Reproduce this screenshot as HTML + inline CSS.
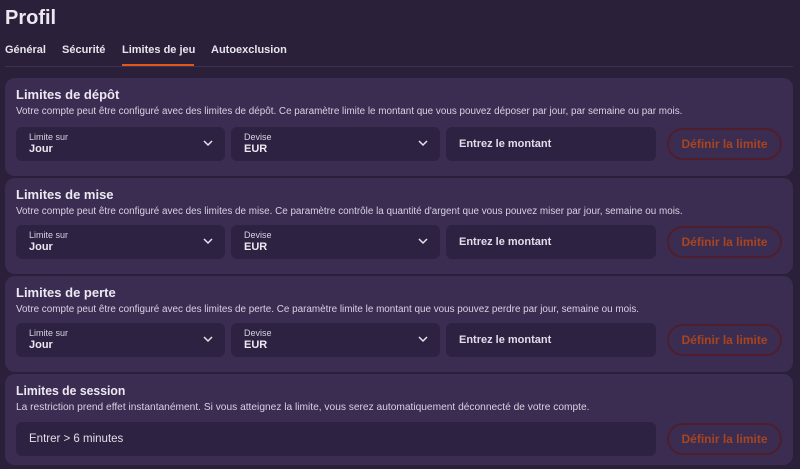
<!DOCTYPE html>
<html><head><meta charset="utf-8"><style>
*{box-sizing:border-box;margin:0;padding:0}
body{width:800px;height:469px;overflow:hidden;background:#2a2039;font-family:"Liberation Sans",sans-serif;color:#ece8f2;position:relative}
.a{position:absolute}
h1{position:absolute;left:5px;top:7px;font-size:20px;font-weight:bold}
.tab{position:absolute;top:44px;font-size:11px;font-weight:bold;color:#e8e4ee}
.div{left:5px;top:66px;width:788px;height:1px;background:#3d3350}
.card{position:absolute;left:5px;width:788px;background:#3b2d52;border-radius:10px}
.t{position:absolute;left:11px;top:9px;font-size:13px;font-weight:bold}
.d{position:absolute;left:11px;top:28px;font-size:9.9px;color:#d8d2e2;white-space:nowrap}
.f{position:absolute;top:49px;height:34px;background:#2d2241;border-radius:6px}
.l{position:absolute;left:13px;top:5px;font-size:9px;color:#d8d2e2}
.v{position:absolute;left:13px;top:16px;font-size:11px;font-weight:bold}
.p{position:absolute;left:13px;top:11px;font-size:11px;font-weight:bold;color:#e2dcea}
.ch{position:absolute;right:12px;top:12px}
.b{position:absolute;left:662px;top:50px;width:115px;height:32px;border:2px solid #4f1e2c;border-radius:16px;color:#a8441f;font-size:12px;font-weight:bold;text-align:center;line-height:28px}
</style></head><body>
<h1>Profil</h1>
<div class="tab" style="left:5px">Général</div>
<div class="tab" style="left:62px">Sécurité</div>
<div class="tab" style="left:122px">Limites de jeu</div>
<div class="tab" style="left:211px">Autoexclusion</div>
<div class="a div"></div>
<div class="a" style="left:122px;top:64px;width:72px;height:2px;background:#e0561c"></div>

<div class="card" style="top:78px;height:98px">
<div class="t">Limites de dépôt</div>
<div class="d">Votre compte peut être configuré avec des limites de dépôt. Ce paramètre limite le montant que vous pouvez déposer par jour, par semaine ou par mois.</div>
<div class="f" style="left:11px;width:209px"><div class="l">Limite sur</div><div class="v">Jour</div><svg class="ch" width="10" height="8" viewBox="0 0 10 8"><path d="M1 2l4 4 4-4" stroke="#e8e4ee" stroke-width="1.5" fill="none"/></svg></div>
<div class="f" style="left:226px;width:209px"><div class="l">Devise</div><div class="v">EUR</div><svg class="ch" width="10" height="8" viewBox="0 0 10 8"><path d="M1 2l4 4 4-4" stroke="#e8e4ee" stroke-width="1.5" fill="none"/></svg></div>
<div class="f" style="left:441px;width:210px"><div class="p">Entrez le montant</div></div>
<div class="b">Définir la limite</div>
</div>

<div class="card" style="top:178px;height:96px">
<div class="t">Limites de mise</div>
<div class="d">Votre compte peut être configuré avec des limites de mise. Ce paramètre contrôle la quantité d'argent que vous pouvez miser par jour, semaine ou mois.</div>
<div class="f" style="left:11px;width:209px;top:47px"><div class="l">Limite sur</div><div class="v">Jour</div><svg class="ch" width="10" height="8" viewBox="0 0 10 8"><path d="M1 2l4 4 4-4" stroke="#e8e4ee" stroke-width="1.5" fill="none"/></svg></div>
<div class="f" style="left:226px;width:209px;top:47px"><div class="l">Devise</div><div class="v">EUR</div><svg class="ch" width="10" height="8" viewBox="0 0 10 8"><path d="M1 2l4 4 4-4" stroke="#e8e4ee" stroke-width="1.5" fill="none"/></svg></div>
<div class="f" style="left:441px;width:210px;top:47px"><div class="p">Entrez le montant</div></div>
<div class="b" style="top:48px">Définir la limite</div>
</div>

<div class="card" style="top:276px;height:96px">
<div class="t">Limites de perte</div>
<div class="d">Votre compte peut être configuré avec des limites de perte. Ce paramètre limite le montant que vous pouvez perdre par jour, semaine ou mois.</div>
<div class="f" style="left:11px;width:209px;top:47px"><div class="l">Limite sur</div><div class="v">Jour</div><svg class="ch" width="10" height="8" viewBox="0 0 10 8"><path d="M1 2l4 4 4-4" stroke="#e8e4ee" stroke-width="1.5" fill="none"/></svg></div>
<div class="f" style="left:226px;width:209px;top:47px"><div class="l">Devise</div><div class="v">EUR</div><svg class="ch" width="10" height="8" viewBox="0 0 10 8"><path d="M1 2l4 4 4-4" stroke="#e8e4ee" stroke-width="1.5" fill="none"/></svg></div>
<div class="f" style="left:441px;width:210px;top:47px"><div class="p">Entrez le montant</div></div>
<div class="b" style="top:48px">Définir la limite</div>
</div>

<div class="card" style="top:374px;height:91px">
<div class="t" style="transform:scaleX(.94);transform-origin:left">Limites de session</div>
<div class="d" style="font-size:10.2px">La restriction prend effet instantanément. Si vous atteignez la limite, vous serez automatiquement déconnecté de votre compte.</div>
<div class="f" style="left:11px;width:640px;top:48px"><div class="p" style="font-weight:normal;font-size:11.5px">Entrer &gt; 6 minutes</div></div>
<div class="b" style="top:49px">Définir la limite</div>
</div>
</body></html>
